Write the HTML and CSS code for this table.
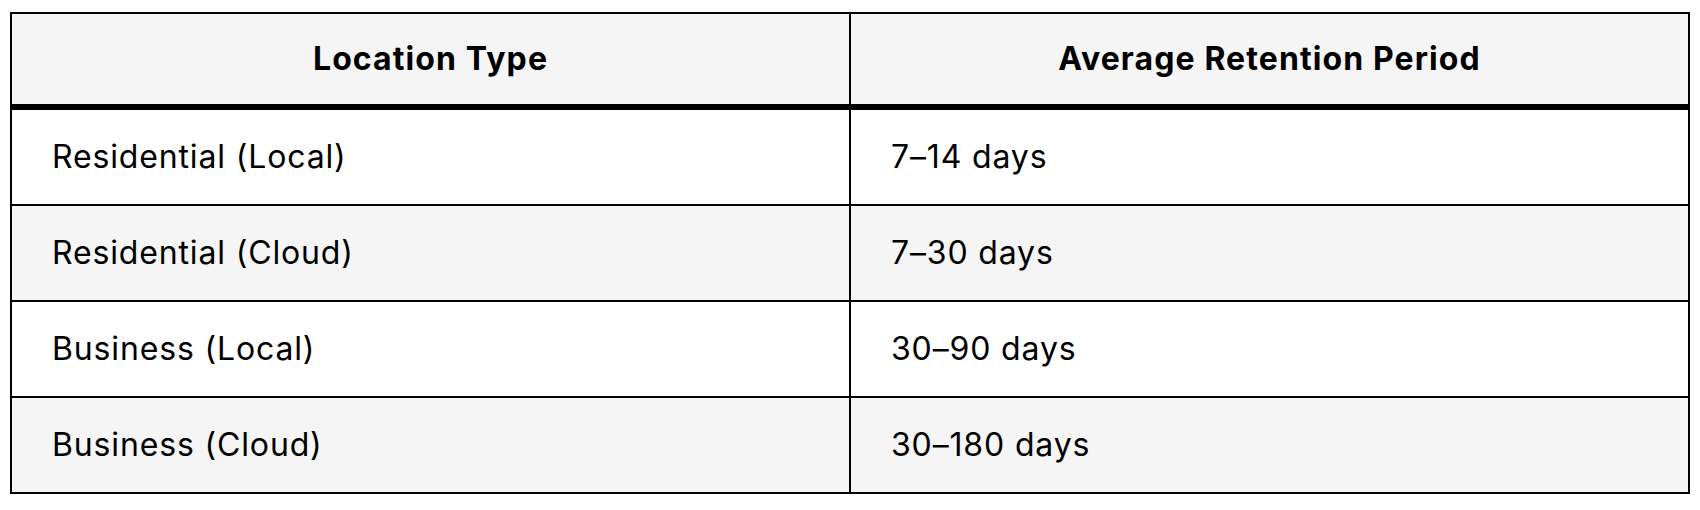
FILE: index.html
```
<!DOCTYPE html>
<html lang="en">
<head>
<meta charset="utf-8">
<title>Retention Periods</title>
<link rel="stylesheet" href="styles.css">
</head>
<body>
<table class="retention">
  <colgroup>
    <col class="col-first">
    <col class="col-second">
  </colgroup>
  <thead>
    <tr>
      <th class="cell cell-first">Location Type</th>
      <th class="cell">Average Retention Period</th>
    </tr>
  </thead>
  <tbody>
    <tr>
      <td class="cell cell-first">Residential (Local)</td>
      <td class="cell">7–14 days</td>
    </tr>
    <tr class="alt">
      <td class="cell cell-first">Residential (Cloud)</td>
      <td class="cell">7–30 days</td>
    </tr>
    <tr>
      <td class="cell cell-first">Business (Local)</td>
      <td class="cell">30–90 days</td>
    </tr>
    <tr class="alt">
      <td class="cell cell-first">Business (Cloud)</td>
      <td class="cell">30–180 days</td>
    </tr>
  </tbody>
</table>
</body>
</html>
```
FILE: styles.css
```
html, body {
  margin: 0;
  padding: 0;
  background: #ffffff;
}

body {
  padding: 12px 10px;
  font-family: Inter, "Liberation Sans", sans-serif;
  color: #000000;
}

.retention {
  border-collapse: separate;
  border-spacing: 0;
  table-layout: fixed;
  width: 1680px;
  border: 2px solid #000000;
}

.col-first {
  width: 839px;
}

.col-second {
  width: 837px;
}

.cell {
  padding: 0 40px;
  font-size: 32px;
  white-space: nowrap;
  border-bottom: 2px solid #000000;
}

.cell-first {
  border-right: 2px solid #000000;
}

.retention th {
  background: #f5f5f5;
  font-weight: 700;
  letter-spacing: 1.1px;
  text-align: center;
  line-height: 90px;
  border-bottom-width: 6px;
}

.retention td {
  font-weight: 400;
  letter-spacing: 0.85px;
  text-align: left;
  line-height: 94px;
}

.retention tbody tr:last-child td {
  border-bottom: 0;
}

.retention tr.alt td {
  background: #f5f5f5;
}
```
